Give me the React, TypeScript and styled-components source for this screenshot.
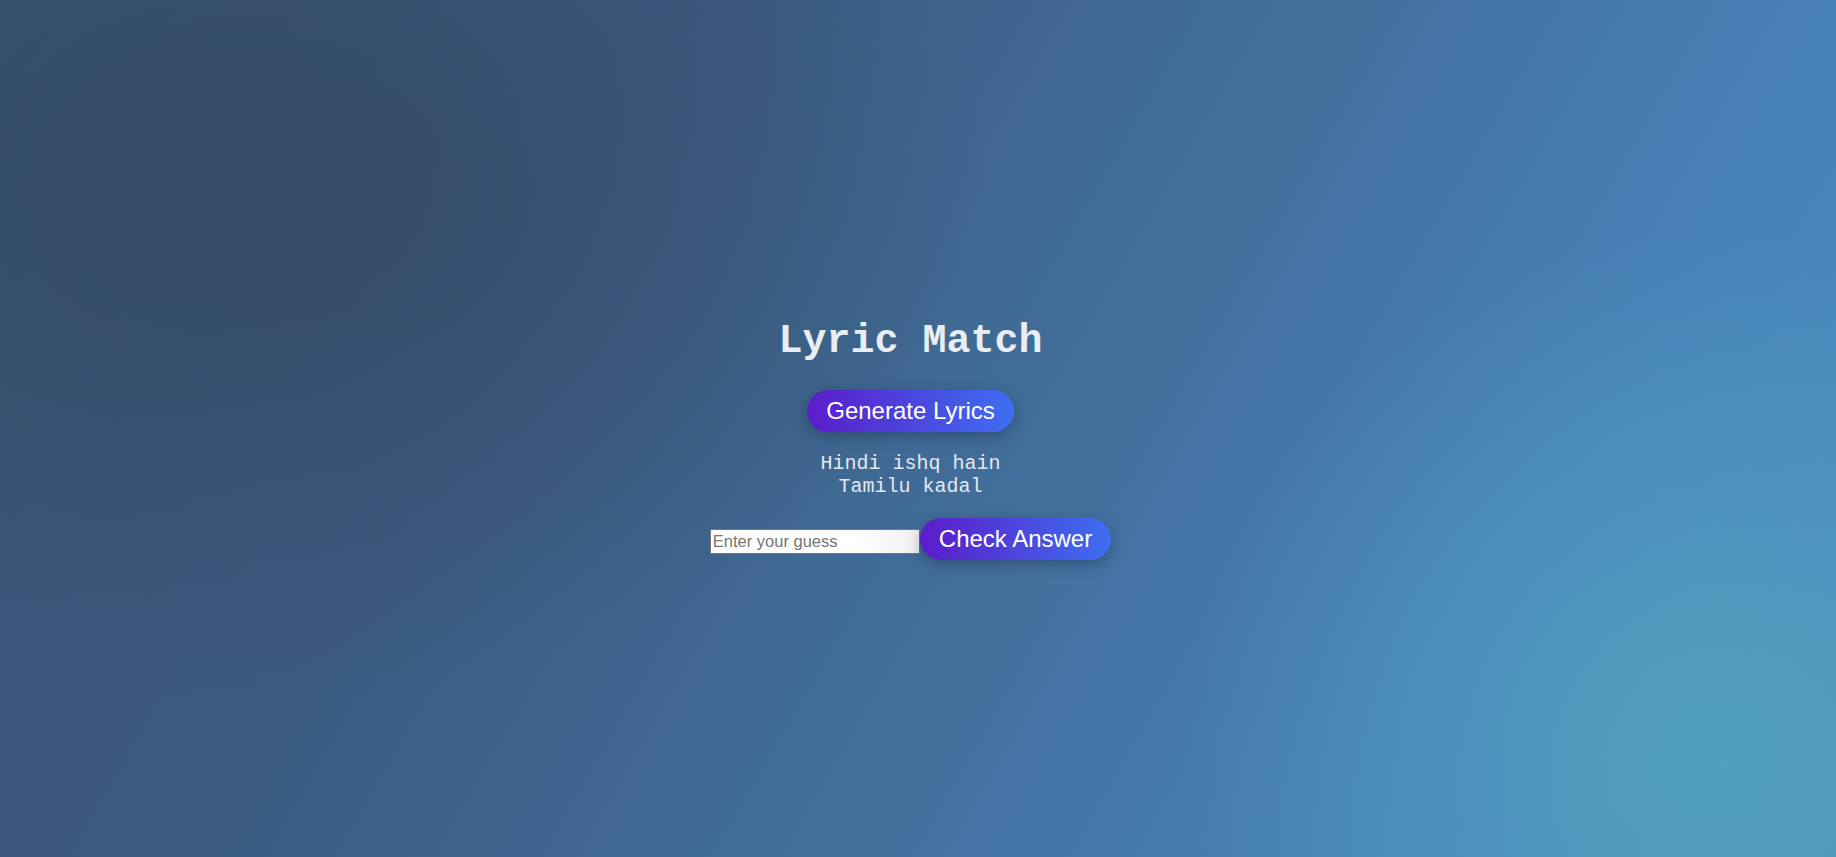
import React, { useState } from "react";
import styled, { createGlobalStyle } from "styled-components";

const GlobalStyle = createGlobalStyle`
  html, body {
    margin: 0;
    padding: 0;
  }
  body {
    font-family: "Liberation Sans", Arial, sans-serif;
  }
  * {
    box-sizing: border-box;
  }
`;

const Page = styled.main`
  min-height: 100vh;
  display: flex;
  flex-direction: column;
  align-items: center;
  justify-content: center;
  padding: 22px 15px 0 0;
  background:
    radial-gradient(circle at 93% 88%, rgba(84, 164, 190, 0.85) 0, rgba(84, 164, 190, 0) 28%),
    radial-gradient(ellipse 40% 60% at 14% 22%, rgba(51, 70, 95, 0.75) 0, rgba(51, 70, 95, 0) 100%),
    linear-gradient(120deg, #385574 0%, #3b5b80 30%, #42709d 58%, #4782b9 80%, #4b8cbf 100%);
`;

const Title = styled.h1`
  margin: 0 0 26px;
  font-family: "Liberation Mono", "Courier New", monospace;
  font-weight: 700;
  font-size: 40px;
  color: #e9eef2;
`;

const PillButton = styled.button`
  border: none;
  border-radius: 999px;
  padding: 7px 19px;
  font-family: "Liberation Sans", Arial, sans-serif;
  font-size: 24px;
  color: #ffffff;
  background: linear-gradient(to right, #5b1cc9, #3d6ff1);
  box-shadow: 0 4px 14px rgba(20, 30, 60, 0.35);
  cursor: pointer;
`;

const Lyrics = styled.div`
  margin: 20px 0 20px;
  font-family: "Liberation Mono", "Courier New", monospace;
  font-size: 20px;
  color: #e1e8ef;
  text-align: center;
`;

const LyricLine = styled.div``;

const GuessRow = styled.div`
  display: flex;
  align-items: baseline;
`;

const GuessInput = styled.input`
  width: 210px;
  height: 25px;
  padding: 1px 2px;
  border: 1px solid #767676;
  font-family: "Liberation Sans", Arial, sans-serif;
  font-size: 16.5px;
  color: #222;
  background: linear-gradient(to right, #ffffff 70%, #f0f0f0);
  &::placeholder {
    color: #757575;
  }
`;

export default function App() {
  const [guess, setGuess] = useState("");
  const lines = ["Hindi ishq hain", "Tamilu kadal"];
  return (
    <>
      <GlobalStyle />
      <Page>
        <Title>Lyric Match</Title>
        <PillButton>Generate Lyrics</PillButton>
        <Lyrics>
          {lines.map((l) => (
            <LyricLine key={l}>{l}</LyricLine>
          ))}
        </Lyrics>
        <GuessRow>
          <GuessInput
            placeholder="Enter your guess"
            value={guess}
            onChange={(e) => setGuess(e.target.value)}
          />
          <PillButton>Check Answer</PillButton>
        </GuessRow>
      </Page>
    </>
  );
}
